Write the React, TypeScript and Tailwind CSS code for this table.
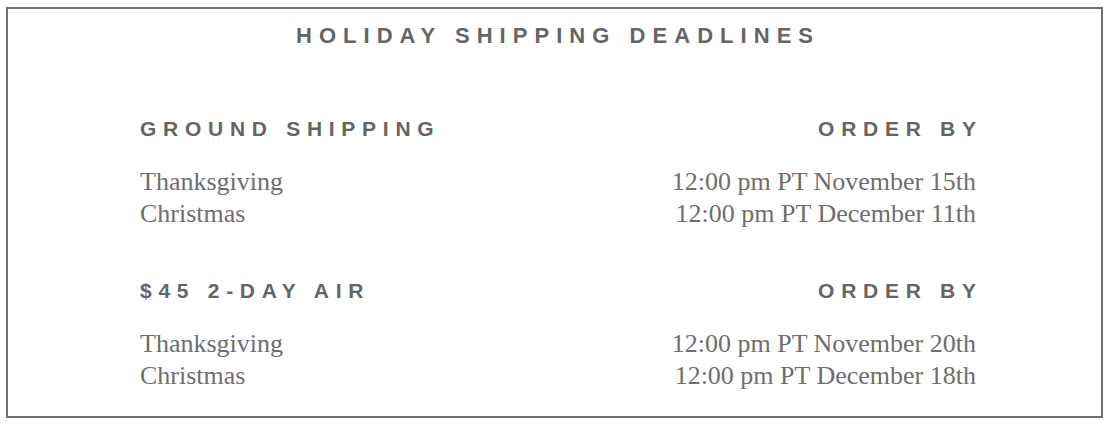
import React from "react";

const sans = { fontFamily: '"Liberation Sans", Arial, sans-serif' };
const serif = { fontFamily: '"Liberation Serif", "Times New Roman", serif' };

function Section({ title, rows, className }: { title: string; rows: [string, string][]; className?: string }) {
  return (
    <div className={className}>
      <div className="flex justify-between text-[21px] leading-[21px] font-bold tracking-[0.32em] text-[#656565]" style={sans}>
        <span>{title}</span>
        <span className="mr-[-0.32em]">ORDER BY</span>
      </div>
      <div className="mt-[27px] flex justify-between text-[26px] leading-[32px] text-[#6e6e6e]" style={serif}>
        <div className="flex flex-col">
          {rows.map(([a]) => (
            <span key={a}>{a}</span>
          ))}
        </div>
        <div className="flex flex-col items-end">
          {rows.map(([a, b]) => (
            <span key={a}>{b}</span>
          ))}
        </div>
      </div>
    </div>
  );
}

export default function App() {
  return (
    <div className="w-[1109px] h-[447px] bg-white pt-[7px] px-[6px]">
      <div className="h-[411px] border-2 border-[#707070] pt-[16px] pl-[132px] pr-[125px]">
        <div
          className="text-center text-[22px] leading-[22px] font-bold tracking-[0.32em] text-[#656565] ml-[-132px] mr-[-125px] pl-[0.32em]"
          style={sans}
        >
          HOLIDAY SHIPPING DEADLINES
        </div>
        <Section
          className="mt-[71px]"
          title="GROUND SHIPPING"
          rows={[
            ["Thanksgiving", "12:00 pm PT November 15th"],
            ["Christmas", "12:00 pm PT December 11th"],
          ]}
        />
        <Section
          className="mt-[50px]"
          title="$45 2-DAY AIR"
          rows={[
            ["Thanksgiving", "12:00 pm PT November 20th"],
            ["Christmas", "12:00 pm PT December 18th"],
          ]}
        />
      </div>
    </div>
  );
}
